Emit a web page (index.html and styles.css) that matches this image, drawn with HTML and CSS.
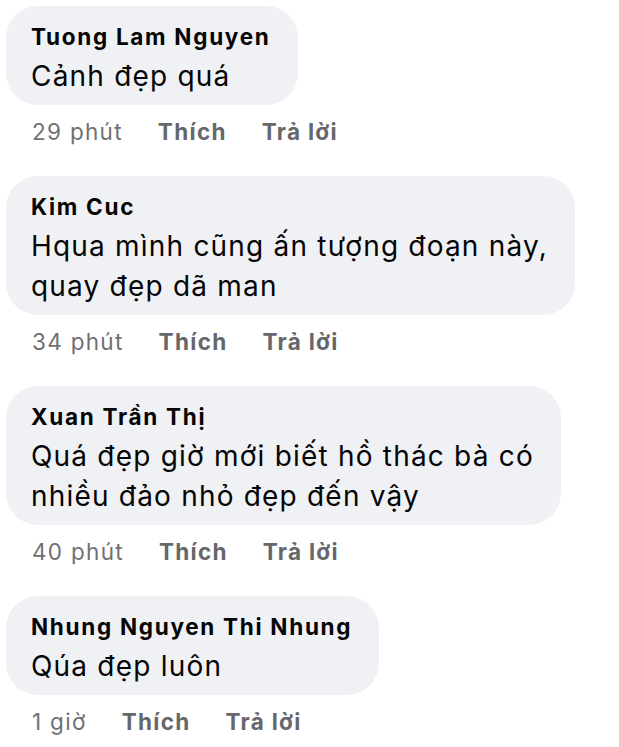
FILE: index.html
```html
<!DOCTYPE html>
<html lang="vi">
<head>
<meta charset="utf-8">
<title>Bình luận</title>
<link rel="stylesheet" href="styles.css">
</head>
<body>
<div class="comments">
  <div class="comment">
    <div class="bubble">
      <div class="name">Tuong Lam Nguyen</div>
      <div class="text">Cảnh đẹp quá</div>
    </div>
    <div class="meta"><span class="time">29 phút</span><span class="action">Thích</span><span class="action">Trả lời</span></div>
  </div>
  <div class="comment">
    <div class="bubble">
      <div class="name">Kim Cuc</div>
      <div class="text">Hqua mình cũng ấn tượng đoạn này,<br>quay đẹp dã man</div>
    </div>
    <div class="meta"><span class="time">34 phút</span><span class="action">Thích</span><span class="action">Trả lời</span></div>
  </div>
  <div class="comment">
    <div class="bubble">
      <div class="name">Xuan Trần Thị</div>
      <div class="text">Quá đẹp giờ mới biết hồ thác bà có<br>nhiều đảo nhỏ đẹp đến vậy</div>
    </div>
    <div class="meta"><span class="time">40 phút</span><span class="action">Thích</span><span class="action">Trả lời</span></div>
  </div>
  <div class="comment">
    <div class="bubble">
      <div class="name">Nhung Nguyen Thi Nhung</div>
      <div class="text">Qúa đẹp luôn</div>
    </div>
    <div class="meta"><span class="time">1 giờ</span><span class="action">Thích</span><span class="action">Trả lời</span></div>
  </div>
</div>
</body>
</html>
```
FILE: styles.css
```css
html, body {
  margin: 0;
  padding: 0;
  background: #ffffff;
}
body {
  font-family: Inter, "Noto Sans", sans-serif;
  color: #050505;
}
.comments {
  display: flex;
  flex-direction: column;
  align-items: flex-start;
  padding: 6px 0 0 6px;
}
.comment {
  display: flex;
  flex-direction: column;
  align-items: flex-start;
  margin-bottom: 29px;
}
.bubble {
  background: #f0f1f5;
  border-radius: 32px;
  padding: 17px 27px 9px 25px;
  white-space: nowrap;
}
.name {
  font-size: 22.5px;
  font-weight: 700;
  line-height: 28px;
  letter-spacing: 1.7px;
  margin-bottom: 5px;
}
.text {
  font-size: 28px;
  line-height: 40px;
  letter-spacing: 1.2px;
}
.meta {
  display: flex;
  gap: 35px;
  margin-top: 12px;
  padding-left: 26px;
  font-size: 22.5px;
  line-height: 30px;
  letter-spacing: 1.3px;
  color: #65676b;
}
.time {
  color: #6f7074;
}
.action {
  font-weight: 700;
}
```
